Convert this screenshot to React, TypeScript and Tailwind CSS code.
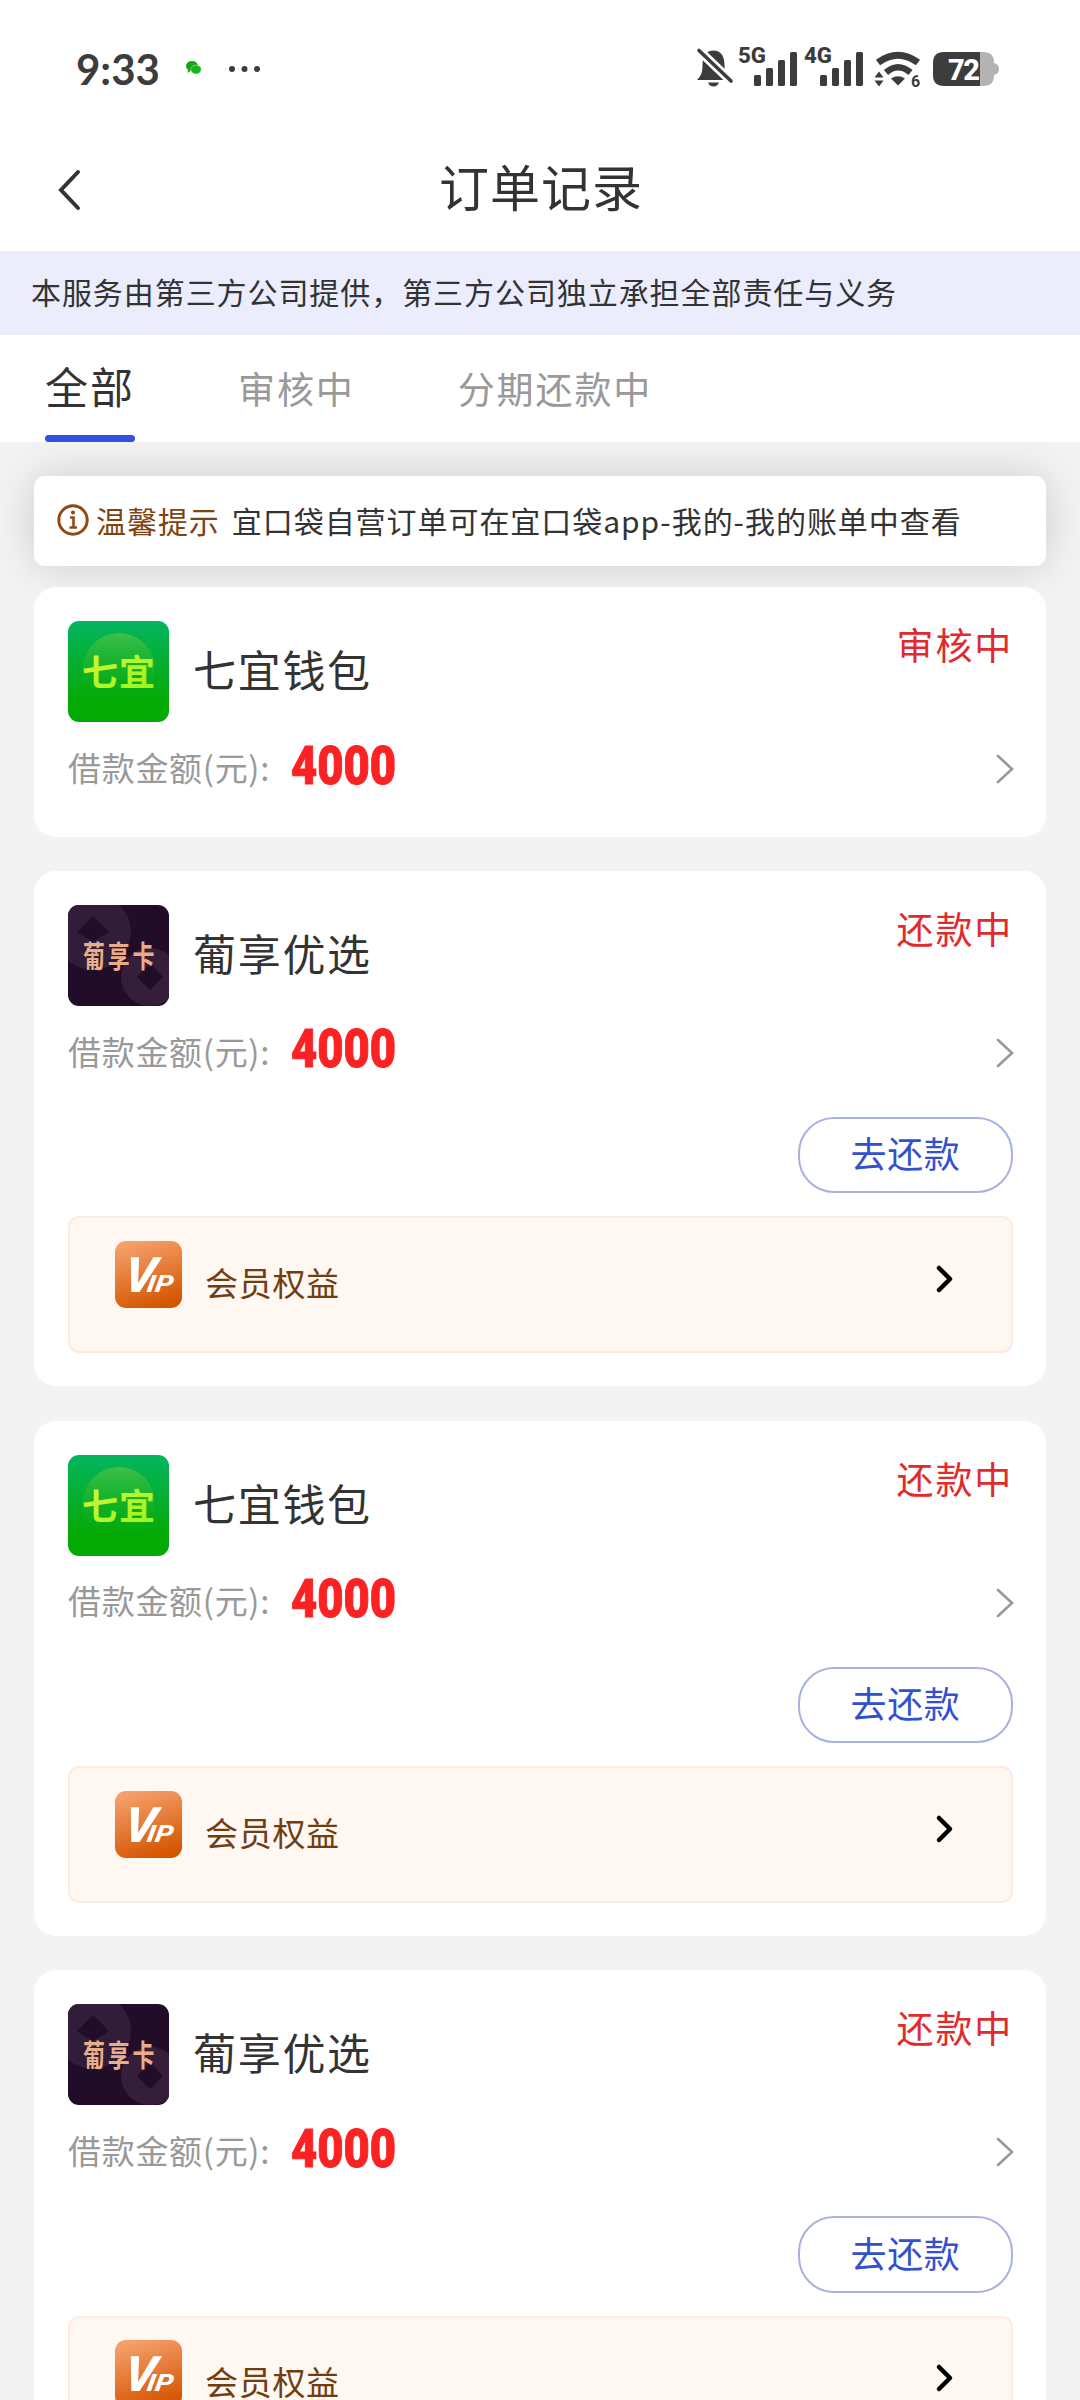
const orders = [
  { brand: "qiyi", name: "七宜钱包", status: "审核中", amount: 4000, active: false },
  { brand: "puxiang", name: "葡享优选", status: "还款中", amount: 4000, active: true },
  { brand: "qiyi", name: "七宜钱包", status: "还款中", amount: 4000, active: true },
  { brand: "puxiang", name: "葡享优选", status: "还款中", amount: 4000, active: true },
];

type Order = (typeof orders)[number];

function SignalBars({ label }: { label: string }) {
  return (
    <svg className="overflow-visible" width="60" height="40" viewBox="0 0 60 40" fill="#3c3c3c">
      <text x="-1" y="14" fontSize="22" fontWeight="800" fontFamily="Roboto, sans-serif" textLength="28" lengthAdjust="spacingAndGlyphs">
        {label}
      </text>
      <rect x="15" y="26" width="7" height="11" rx="1.5" />
      <rect x="27" y="19" width="7" height="18" rx="1.5" />
      <rect x="39" y="11" width="7" height="26" rx="1.5" />
      <rect x="51" y="3" width="7" height="34" rx="1.5" />
    </svg>
  );
}

function StatusBar() {
  return (
    <div className="flex h-[138px] items-center justify-between pl-[76px] pr-[82px]">
      <div className="flex items-center">
        <span className="w-[84px] whitespace-nowrap font-[Lato] text-[42px] leading-none font-bold text-[#3c3c3c]">
          9:33
        </span>
        <svg className="mb-[3px] ml-[24px]" width="20" height="16" viewBox="0 0 20 16">
          <ellipse cx="8" cy="6" rx="6" ry="5" fill="#0fa80f" />
          <ellipse cx="12" cy="9.5" rx="5.2" ry="4.5" fill="#19b619" stroke="#fff" strokeWidth=".4" />
          <path d="M4 9l-.5 4 3-2z" fill="#0fa80f" />
        </svg>
        <svg className="ml-[24px]" width="34" height="8" viewBox="0 0 34 8" fill="#3c3c3c">
          <circle cx="4" cy="4" r="3" />
          <circle cx="16.5" cy="4" r="3" />
          <circle cx="29" cy="4" r="3" />
        </svg>
      </div>
      <div className="flex items-center">
        <svg className="mr-[3px] overflow-visible" width="40" height="40" viewBox="0 0 40 40" fill="#3c3c3c">
          <path d="M1 31C5 27 6.500 24 6.500 16C6.500 6 11 1.500 17.500 1.500S28.500 6 28.500 16C28.500 24 30 27 32 31Z" />
          <path d="M12 33.500h11q-1.500 4-5.500 4t-5.500-4z" />
          <path d="M1 -0.500L37 34" stroke="#fff" strokeWidth="9" />
          <path d="M3 1.500L35 32" stroke="#3c3c3c" strokeWidth="3.600" strokeLinecap="round" />
        </svg>
        <SignalBars label="5G" />
        <span className="w-[6px]" />
        <SignalBars label="4G" />
        <svg className="ml-[9px] overflow-visible" width="50" height="40" viewBox="0 0 50 40" fill="none" stroke="#3c3c3c">
          <path d="M4 13.500Q24 -1 44 13.500" strokeWidth="7" />
          <path d="M12 23.500Q24 13 36.500 23.500" strokeWidth="6.500" />
          <path d="M17 29.500Q24 25 31 29.500L24 36.500Z" fill="#3c3c3c" stroke="none" />
          <path d="M0.500 28.500L5 22.500L9.500 28.500ZM0.500 31.500L5 37.500L9.500 31.500Z" fill="#3c3c3c" stroke="none" />
          <text x="37" y="38" fontSize="16" fontWeight="700" fontFamily="Roboto, sans-serif" fill="#3c3c3c" stroke="none">
            6
          </text>
        </svg>
        <svg className="mr-[-1px] ml-[9px]" width="66" height="34" viewBox="0 0 66 34">
          <path d="M47 0h3q11 0 11 10v1q5 1 5 6t-5 6v1q0 10-11 10h-3z" fill="#b3b3b3" />
          <path d="M47 0H11Q0 0 0 11V23Q0 34 11 34H47Z" fill="#3c3c3c" />
          <text x="15" y="27.500" fontSize="29" fontWeight="800" fontFamily="Roboto, sans-serif" fill="#fff" textLength="32">
            72
          </text>
        </svg>
      </div>
    </div>
  );
}

function QiyiLogo() {
  return (
    <svg width="101" height="101" viewBox="0 0 101 101" className="shrink-0 rounded-[11px]">
      <defs>
        <linearGradient id="qiyi-bg" x1="0" y1="0" x2="0" y2="1">
          <stop offset="0" stopColor="#04b560" />
          <stop offset=".8" stopColor="#05a904" />
          <stop offset="1" stopColor="#05a904" />
        </linearGradient>
        <linearGradient id="qiyi-disc" x1="0" y1="0" x2="0" y2="1">
          <stop offset="0" stopColor="#3dbf48" />
          <stop offset="1" stopColor="#05a904" stopOpacity="0" />
        </linearGradient>
        <linearGradient id="qiyi-text" x1="0" y1="0" x2="1" y2="1">
          <stop offset="0" stopColor="#d8f63c" />
          <stop offset="1" stopColor="#93f41c" />
        </linearGradient>
      </defs>
      <rect width="101" height="101" fill="url(#qiyi-bg)" />
      <circle cx="51" cy="48" r="36" fill="url(#qiyi-disc)" />
      <text x="14" y="65" fontSize="36" fontWeight="700" letterSpacing="1" fontFamily="'Noto Sans CJK SC', sans-serif" fill="url(#qiyi-text)">
        七宜
      </text>
    </svg>
  );
}

function PuxiangLogo() {
  return (
    <svg width="101" height="101" viewBox="0 0 101 101" className="shrink-0 rounded-[11px]">
      <rect width="101" height="101" fill="#220d28" />
      <circle cx="25" cy="27" r="38" fill="#311d38" />
      <path d="M25 11l16 16-16 10L9 27z" fill="#220d28" />
      <circle cx="82" cy="72" r="29" fill="#351e3a" />
      <path d="M82 58l13 14-13 13-13-13z" fill="#220d28" />
      <text
        transform="translate(15 62) scale(0.73 1)"
        fontSize="30"
        fontWeight="700"
        letterSpacing="4"
        fontFamily="'Noto Sans CJK SC', sans-serif"
        fill="#e9ad8a"
      >
        葡享卡
      </text>
    </svg>
  );
}

function VipIcon() {
  return (
    <svg width="67" height="67" viewBox="0 0 67 67" className="shrink-0 rounded-[11px]">
      <defs>
        <linearGradient id="vip-bg" x1=".3" y1="0" x2=".6" y2="1">
          <stop offset="0" stopColor="#f5a06b" />
          <stop offset="1" stopColor="#d45500" />
        </linearGradient>
      </defs>
      <rect width="67" height="67" fill="url(#vip-bg)" />
      <text
        transform="translate(7 51) skewX(-9)"
        fontSize="49"
        fontFamily="Roboto, sans-serif"
        fontStyle="italic"
        fontWeight="800"
        fill="#fff"
      >
        V
        <tspan x="24" fontSize="24" textLength="26" lengthAdjust="spacingAndGlyphs">IP</tspan>
      </text>
    </svg>
  );
}

function OrderCard({ order }: { order: Order }) {
  return (
    <section className="rounded-[22px] bg-white px-[34px] pt-[34px] pb-[33.5px]">
      <div className="flex h-[101px]">
        {order.brand === "qiyi" ? <QiyiLogo /> : <PuxiangLogo />}
        <h2 className="ml-[24px] flex-1 text-[43px] leading-[94px] tracking-[1.7px]">{order.name}</h2>
        <span className="mr-[-1px] text-[37px] leading-[47px] tracking-[1.8px] text-[#e22a2c]">{order.status}</span>
      </div>
      <div className="mt-[17px] flex h-[60px] items-center">
        <span className="w-[223px] pb-[3px] text-[33px] tracking-[0.7px] whitespace-nowrap text-[#999]">借款金额(元):</span>
        <span className="origin-left scale-x-[0.84] pb-[7px] font-[Roboto] text-[54px] leading-none font-black text-[#fb2224] [-webkit-text-stroke:1px_#fb2224]">
          {order.amount}
        </span>
        <svg className="mr-[-2px] ml-auto" width="19" height="32" viewBox="0 0 19 32" fill="none" stroke="#999" strokeWidth="2.6" strokeLinecap="round">
          <path d="M3 3L17 16L3 29" />
        </svg>
      </div>
      {order.active ? (
        <>
          <div className="mt-[34px] mr-[-1px] flex justify-end">
            <button className="h-[76.5px] w-[215px] rounded-[36px] border-2 border-[#a9b1e0] pb-[6px] text-[36px] tracking-[0.6px] text-[#3350cf]">
              去还款
            </button>
          </div>
          <div className="mt-[23px] mr-[-1px] flex h-[136.5px] items-start rounded-[11px] border-2 border-[#fdebe0] bg-[#fff7f1] pt-[22.5px] pr-[53px] pl-[45px]">
            <VipIcon />
            <span className="mt-[16px] ml-[23px] text-[33px] leading-[50px] tracking-[0.7px] text-[#713c10]">会员权益</span>
            <svg className="mt-[22px] ml-auto" width="24" height="32" viewBox="0 0 24 32" fill="none" stroke="#000" strokeWidth="4.500" strokeLinecap="round" strokeLinejoin="round">
              <path d="M5 5L16 16L5 27" />
            </svg>
          </div>
        </>
      ) : (
        <div className="h-[4px]" />
      )}
    </section>
  );
}

export default function App() {
  return (
    <div className="h-[2400px] w-[1080px] overflow-hidden bg-[#f3f3f3] font-['Noto_Sans_CJK_SC',sans-serif] text-[#333]">
      <header className="bg-white">
        <StatusBar />
        <div className="flex h-[113px] items-start justify-between px-[56px] pt-[10px]">
          <svg className="mt-[20px]" width="28" height="44" viewBox="0 0 28 44" fill="none" stroke="#333" strokeWidth="4" strokeLinecap="round">
            <path d="M22 4L5 22L22 40" />
          </svg>
          <h1 className="text-[50px] leading-[74px] tracking-[1px]">订单记录</h1>
          <span className="w-[26px]" />
        </div>
      </header>

      <p className="h-[84px] bg-[#ebedfd] pl-[31px] text-[30px] leading-[81px] tracking-[0.93px]">
        本服务由第三方公司提供，第三方公司独立承担全部责任与义务
      </p>

      <nav className="relative z-10 flex h-[107px] gap-[103px] bg-white pl-[45px] text-[37px] tracking-[1.9px] text-[#999]">
        <div className="flex w-[90px] flex-col justify-between text-[43px] text-[#333]">
          <span className="leading-[100px]">全部</span>
          <span className="h-[8px] rounded-full bg-[#3350e0]" />
        </div>
        <span className="leading-[107px]">审核中</span>
        <span className="leading-[107px]">分期还款中</span>
      </nav>

      <main className="px-[34px] pt-[34px]">
        <div className="flex h-[90px] items-center rounded-[11px] bg-white pl-[22px] text-[30px] tracking-[0.95px] shadow-[0_0_45px_rgba(0,0,0,0.16)]">
          <svg width="34" height="34" viewBox="0 0 34 34" fill="none" stroke="#8f4a18" strokeWidth="3">
            <circle cx="17" cy="16" r="14.200" />
            <path d="M14 13.500H17.500V23M13.500 23.500H21" strokeWidth="2.600" />
            <circle cx="17" cy="8.500" r="2" fill="#8f4a18" stroke="none" />
          </svg>
          <span className="ml-[6px] pb-[2px] text-[#7f4310]">温馨提示</span>
          <span className="ml-[12px] pb-[2px]">宜口袋自营订单可在宜口袋app-我的-我的账单中查看</span>
        </div>
        <div className="relative mt-[21px] flex flex-col gap-[34.25px]">
          {orders.map((order, i) => (
            <OrderCard key={i} order={order} />
          ))}
        </div>
      </main>
    </div>
  );
}
